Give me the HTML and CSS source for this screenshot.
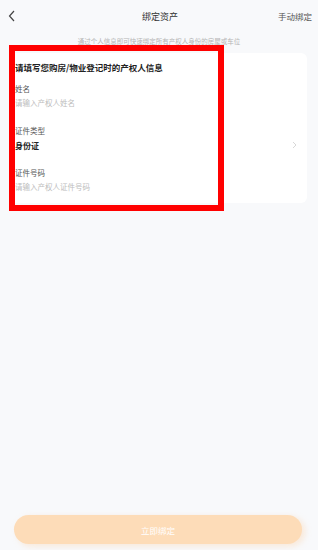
FILE: index.html
```html
<!DOCTYPE html>
<html lang="zh-CN">
<head>
    <meta charset="UTF-8">
    <meta name="viewport" content="width=device-width, initial-scale=1.0">
    <title>绑定资产</title>
    <link rel="stylesheet" href="styles.css">
</head>
<body>
    <div class="screen">
        <div class="nav">
            <svg class="back" width="8" height="12" viewBox="0 0 8 12">
                <path d="M6 1 L1.5 6 L6 11" fill="none" stroke="#444" stroke-width="1.2"/>
            </svg>
            <div class="nav-title">绑定资产</div>
            <div class="nav-action">手动绑定</div>
        </div>
        <div class="tip">通过个人信息即可快速绑定所有产权人身份的房屋或车位</div>

        <div class="card">
            <div class="card-title">请填写您购房/物业登记时的产权人信息</div>
            <div class="field">
                <div class="label">姓名</div>
                <div class="placeholder">请输入产权人姓名</div>
            </div>
            <div class="field">
                <div class="label">证件类型</div>
                <div class="select-row">
                    <span class="value">身份证</span>
                    <svg width="5" height="8" viewBox="0 0 5 8">
                        <path d="M1 1 L4 4 L1 7" fill="none" stroke="#d4d4d4" stroke-width="0.9"/>
                    </svg>
                </div>
            </div>
            <div class="field">
                <div class="label">证件号码</div>
                <div class="placeholder">请输入产权人证件号码</div>
            </div>
        </div>

        <div class="bottom">
            <button class="btn">立即绑定</button>
        </div>

        <!-- annotation box -->
        <div class="highlight"></div>
    </div>
</body>
</html>
```

FILE: styles.css
```css
body {
    margin: 0;
    background-color: #ffffff;
    font-family: "Noto Sans CJK SC", "Noto Sans", sans-serif;
}

.screen {
    position: relative;
    width: 318px;
    height: 550px;
    background-color: #f8f9fb;
    display: flex;
    flex-direction: column;
}

.nav {
    height: 32px;
    display: grid;
    grid-template-columns: 1fr auto 1fr;
    align-items: center;
    padding: 0 6px 0 8px;
}

.back {
    display: block;
}

.nav-title {
    font-size: 9px;
    color: #333;
}

.nav-action {
    justify-self: end;
    font-size: 8.5px;
    color: #555;
}

.tip {
    margin-top: 4px;
    font-size: 6.5px;
    line-height: 10px;
    color: #b5b5b5;
    text-align: center;
}

.card {
    margin: 7px 11px 0 10px;
    padding: 7px 10px 9px 5px;
    background-color: white;
    border-radius: 6px;
}

.card-title {
    font-size: 8.5px;
    line-height: 14px;
    font-weight: bold;
    color: #222;
    margin-bottom: 8px;
}

.field {
    margin-bottom: 14px;
}

.field:last-child {
    margin-bottom: 0;
}

.label {
    font-size: 7.5px;
    line-height: 14px;
    color: #555;
}

.placeholder {
    font-size: 7.5px;
    line-height: 14px;
    color: #bdbdbd;
}

.select-row {
    display: flex;
    justify-content: space-between;
    align-items: center;
    height: 14px;
}

.value {
    font-size: 8px;
    font-weight: bold;
    color: #222;
}

.bottom {
    margin-top: auto;
    padding: 0 16px 6px 14px;
}

.btn {
    width: 100%;
    height: 29px;
    border: none;
    border-radius: 15px;
    background-color: #fddcb8;
    color: white;
    font-family: inherit;
    font-size: 8.5px;
    box-shadow: 3px 2px 6px rgba(253, 200, 150, 0.35);
}

.highlight {
    position: absolute;
    left: 9px;
    top: 45px;
    width: 215px;
    height: 166px;
    border: 6px solid #ff0000;
    box-sizing: border-box;
}
```
